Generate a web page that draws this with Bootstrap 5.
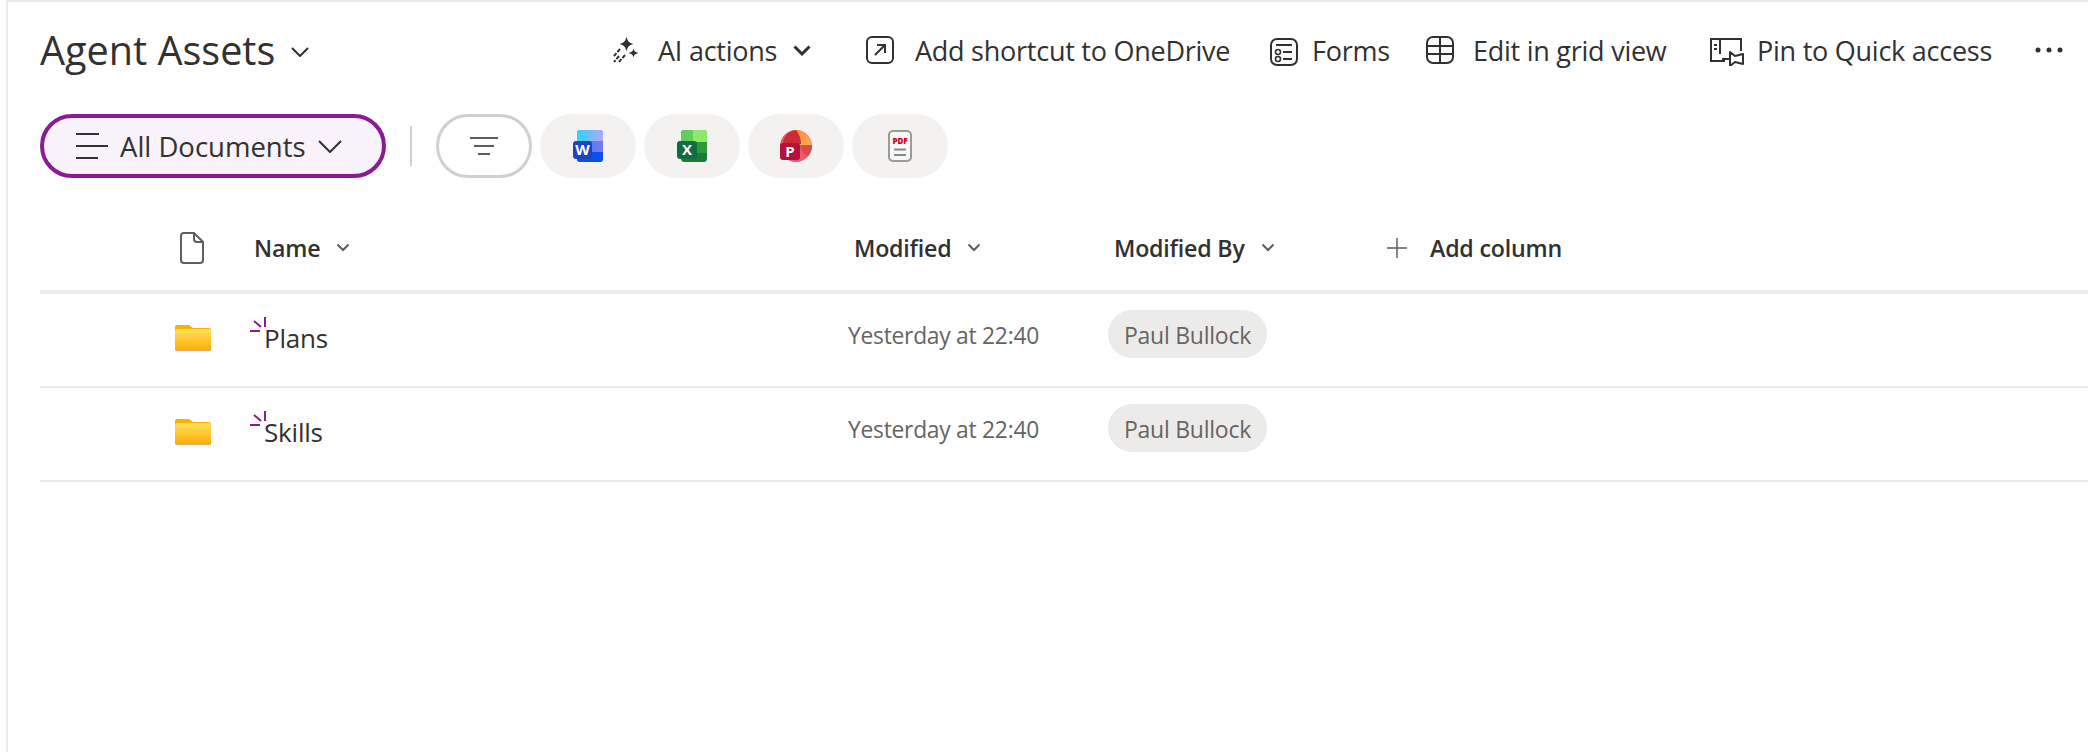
<!DOCTYPE html>
<html lang="en">
<head>
<meta charset="utf-8">
<title>Agent Assets</title>
<link rel="stylesheet" href="https://cdn.jsdelivr.net/npm/bootstrap@5.3.0/dist/css/bootstrap.min.css">
<style>
html,body{height:100%;}
body{background:#fff;color:#323130;font-family:"Open Sans","Noto Sans",sans-serif;overflow:hidden;}
svg{display:block;flex:none;}
.shell{height:752px;margin-left:6px;padding-left:32px;border-top:2px solid #edebe9;border-left:2px solid #edebe9;}
.cmdbar{height:100px;}
.title{flex:0 0 572px;font-size:39.6px;font-weight:500;line-height:1;}
.title>span{display:block;margin-bottom:3px;}
.cmd{font-size:27px;letter-spacing:-.25px;line-height:1;white-space:nowrap;height:40px;}
.cmd>span{display:block;margin-bottom:3px;}
.w-ai{flex:0 0 254px;}.w-short{flex:0 0 404px;}.w-forms{flex:0 0 156px;}.w-grid{flex:0 0 284px;}.w-pin{flex:0 0 325px;}
.g-ai{margin-right:18px;margin-bottom:4px;}.g-short{margin-right:21px;margin-bottom:4px;}.g-forms{margin-right:14px;}.g-grid{margin-right:19px;margin-bottom:4px;}.g-pin{margin-right:13px;margin-bottom:1px;}
.g-aich{margin-bottom:4px;}.dots{margin-bottom:4px;}
.pillbar{height:64px;margin-top:12px;}
.pill{height:64px;width:96px;border-radius:32px;background:#f3f2f1;padding:0;border:0;}
.pill-view{width:346px;border:4px solid #8a1a96;background:#f8f2fa;font-size:27.5px;font-weight:500;color:#323130;padding-left:32px;white-space:nowrap;}
.pill-view>span{display:block;margin-top:2px;}
.g-view{margin-right:12px;}.g-viewch{margin-left:12px;}
.pill-filter{background:#fff;border:3px solid #d2d0ce;}
.vsep{width:2px;height:40px;background:#d2d0ce;margin:0 24px;}
.thead{height:116px;padding-top:28px;border-bottom:4px solid #edebe9;font-size:23.2px;font-weight:600;letter-spacing:-.2px;}
.trow{height:94px;padding-bottom:12px;border-bottom:2px solid #edebe9;}
.c-type{flex:0 0 208px;padding-left:134px;}
.c-name{flex:0 0 600px;}
.trow .c-type,.trow .c-name{margin-top:8px;}
.trow .c-type svg{margin-left:1px;}
.c-mod{flex:0 0 260px;}
.c-by{flex:0 0 279px;}
.thead .lab{padding-left:6px;}
.thead .c-type svg{margin-left:6px;}
.g-plus{margin-right:23px;}
.fname{font-size:26px;padding-left:16px;position:relative;letter-spacing:-.2px;}
.spark{position:absolute;left:2px;top:-2px;}
.date{font-size:22.8px;color:#666462;letter-spacing:-.25px;margin-top:5px;}
.person{height:48px;width:159px;padding:3px 0 0;border-radius:24px;background:#edebe9;color:#666462;font-size:23px;font-weight:400;letter-spacing:-.25px;}
</style>
</head>
<body>
<main class="shell">
  <div class="cmdbar d-flex align-items-center">
    <div class="title d-flex align-items-center gap-3">
      <span>Agent Assets</span>
      <svg width="18" height="10" viewBox="0 0 18 10"><path d="M1 1l8 8 8-8" fill="none" stroke="#323130" stroke-width="2"/></svg>
    </div>
    <div class="cmd w-ai d-flex align-items-center">
      <svg width="28" height="28" viewBox="0 0 28 28" class="g-ai"><path d="M14.500 0.500C15.300 4.800 17 7 21.500 8 17 9 15.300 11.200 14.500 15.500 13.700 11.200 12 9 7.500 8 12 7 13.700 4.800 14.500 .5Z" fill="#323130"/><path d="M21.500 12.500C22 15 23.200 16.200 26.500 17 23.200 17.800 22 19 21.500 21.500 21 19 19.800 17.800 16.500 17 19.800 16.200 21 15 21.500 12.500Z" fill="#323130"/><path d="M8 13 2 20M7 20l-5 6M13 19l-6 7" stroke="#323130" stroke-width="2" stroke-dasharray="4 1.500" fill="none"/></svg>
      <span>AI actions</span>
      <svg width="18" height="11" viewBox="0 0 18 11" class="ms-3 g-aich"><path d="M1.500 1.500l7.500 7.500 7.500-7.500" fill="none" stroke="#323130" stroke-width="3"/></svg>
    </div>
    <div class="cmd w-short d-flex align-items-center">
      <svg width="28" height="28" viewBox="0 0 28 28" class="g-short"><rect x="1" y="1" width="26" height="26" rx="5" fill="none" stroke="#323130" stroke-width="2"/><path d="M9 19 19 9M11 9h8v8" fill="none" stroke="#323130" stroke-width="2"/></svg>
      <span>Add shortcut to OneDrive</span>
    </div>
    <div class="cmd w-forms d-flex align-items-center">
      <svg width="28" height="28" viewBox="0 0 28 28" class="g-forms"><rect x="1" y="1" width="26" height="26" rx="6" fill="none" stroke="#323130" stroke-width="2"/><path d="M6 7h16M13 14h9M13 21h9" stroke="#323130" stroke-width="2"/><circle cx="8" cy="14" r="2.500" fill="none" stroke="#323130" stroke-width="1.600"/><circle cx="8" cy="21" r="2.500" fill="none" stroke="#323130" stroke-width="1.600"/></svg>
      <span>Forms</span>
    </div>
    <div class="cmd w-grid d-flex align-items-center">
      <svg width="28" height="28" viewBox="0 0 28 28" class="g-grid"><rect x="1" y="1" width="26" height="26" rx="6" fill="none" stroke="#323130" stroke-width="2"/><path d="M1 10h26M1 18h26M14 1v26" stroke="#323130" stroke-width="2" fill="none"/></svg>
      <span>Edit in grid view</span>
    </div>
    <div class="cmd w-pin d-flex align-items-center">
      <svg width="34" height="28" viewBox="0 0 34 28" class="g-pin"><path d="M15 23H1V1h30v12M10 1v15M4 7h3M4 11h3" fill="none" stroke="#323130" stroke-width="2"/><path d="M12 21h9" stroke="#323130" stroke-width="2"/><path d="M20 14l5 4 8-2v10l-8-2-5 4z" fill="#fff" stroke="#323130" stroke-width="2" stroke-linejoin="round"/></svg>
      <span>Pin to Quick access</span>
    </div>
    <svg width="28" height="6" viewBox="0 0 28 6" class="dots"><circle cx="3" cy="3" r="2.500" fill="#323130"/><circle cx="14" cy="3" r="2.500" fill="#323130"/><circle cx="25" cy="3" r="2.500" fill="#323130"/></svg>
  </div>

  <div class="pillbar d-flex align-items-center">
    <button class="btn pill pill-view d-flex align-items-center" type="button">
      <svg width="32" height="26" viewBox="0 0 32 26" class="g-view"><path d="M0 1h23M0 13h32M0 25h22" stroke="#323130" stroke-width="2"/></svg>
      <span>All Documents</span>
      <svg width="24" height="13" viewBox="0 0 24 13" class="g-viewch"><path d="M1 1l11 11L23 1" fill="none" stroke="#323130" stroke-width="2"/></svg>
    </button>
    <span class="vsep"></span>
    <div class="d-flex gap-2">
      <button class="btn pill pill-filter d-flex align-items-center justify-content-center" type="button">
        <svg width="28" height="18" viewBox="0 0 28 18"><path d="M0 1h28M4 9h20M8 17h12" stroke="#605e5c" stroke-width="2.200"/></svg>
      </button>
      <button class="btn pill d-flex align-items-center justify-content-center" type="button">
        <svg width="30" height="32" viewBox="0 0 30 32"><defs><linearGradient id="wt" x1="0" y1="0" x2="1" y2="0"><stop offset="0" stop-color="#2dd4fb"/><stop offset="1" stop-color="#b5a5f5"/></linearGradient><linearGradient id="wm" x1="0" y1="0" x2="1" y2="0"><stop offset="0" stop-color="#1f8cf0"/><stop offset="1" stop-color="#7f78ee"/></linearGradient></defs><rect x="4" y="0" width="26" height="32" rx="3.500" fill="#0b4fe6"/><path d="M7.500 0h19a3.500 3.500 0 0 1 3.500 3.500V11H4V3.500A3.500 3.500 0 0 1 7.500 0Z" fill="url(#wt)"/><rect x="4" y="11" width="26" height="11" fill="url(#wm)"/><path d="M4 22h26v6.500a3.500 3.500 0 0 1-3.500 3.500H7.500A3.500 3.500 0 0 1 4 28.500Z" fill="#0b51e8"/><rect x="0" y="11" width="19" height="18" rx="3" fill="#1c46bb"/><text x="9.500" y="25" text-anchor="middle" font-family="Open Sans,sans-serif" font-size="15" font-weight="700" fill="#fff">W</text></svg>
      </button>
      <button class="btn pill d-flex align-items-center justify-content-center" type="button">
        <svg width="30" height="32" viewBox="0 0 30 32"><rect x="4" y="0" width="26" height="32" rx="3.500" fill="#1c7a33"/><path d="M7.500 0H16v12H4V3.500A3.500 3.500 0 0 1 7.500 0Z" fill="#5fce5b"/><path d="M16 0h10.500A3.500 3.500 0 0 1 30 3.500V12H16Z" fill="#8fe76c"/><rect x="16" y="12" width="14" height="11" fill="#2c9a3a"/><rect x="0" y="11" width="20" height="18" rx="3" fill="#0f6d42"/><text x="10" y="25" text-anchor="middle" font-family="Open Sans,sans-serif" font-size="15" font-weight="700" fill="#fff">X</text></svg>
      </button>
      <button class="btn pill d-flex align-items-center justify-content-center" type="button">
        <svg width="32" height="32" viewBox="0 0 32 32"><defs><linearGradient id="po" x1="0" y1="0" x2="1" y2="1"><stop offset="0" stop-color="#ff8a3c"/><stop offset="1" stop-color="#ffb14e"/></linearGradient></defs><circle cx="16" cy="16" r="16" fill="#ee5a64"/><path d="M16 0a16 16 0 0 1 16 16H18Z" fill="url(#po)"/><path d="M8 3a16 16 0 0 1 8-3c3 4 5 8 5 14H3A16 16 0 0 1 8 3Z" fill="#c92c39"/><path d="M20 15h12a16 16 0 0 1-4 11c-3 0-6-3-8-11Z" fill="#d84a4f"/><path d="M10 29h13a16 16 0 0 1-14 1Z" fill="#f04f95"/><rect x="0" y="13" width="20" height="17" rx="3" fill="#b4123a"/><text x="10" y="26.500" text-anchor="middle" font-family="Open Sans,sans-serif" font-size="15" font-weight="700" fill="#fff">P</text></svg>
      </button>
      <button class="btn pill d-flex align-items-center justify-content-center" type="button">
        <svg width="24" height="32" viewBox="0 0 24 32"><rect x="1" y="1" width="22" height="30" rx="4" fill="#f8f8f8" stroke="#9a9a9a" stroke-width="2"/><text x="12" y="14" text-anchor="middle" font-family="Open Sans,sans-serif" font-size="8" font-weight="800" fill="#d0021b">PDF</text><path d="M6 19.500h12M6 25h12" stroke="#8a8886" stroke-width="2"/></svg>
      </button>
    </div>
  </div>

  <div class="thead d-flex align-items-center">
    <div class="c-type"><svg width="24" height="32" viewBox="0 0 24 32"><path d="M3.500 1H14l9 9v18a3 3 0 0 1-3 3H4a3 3 0 0 1-3-3V3.500A2.500 2.500 0 0 1 3.500 1ZM14 1v6a3 3 0 0 0 3 3h6" fill="none" stroke="#605e5c" stroke-width="2"/></svg></div>
    <div class="c-name lab d-flex align-items-center gap-3"><span>Name</span><svg width="14" height="9" viewBox="0 0 14 9"><path d="M1.500 1.500l5.500 5.500 5.500-5.500" fill="none" stroke="#605e5c" stroke-width="2"/></svg></div>
    <div class="c-mod lab d-flex align-items-center gap-3"><span>Modified</span><svg width="14" height="9" viewBox="0 0 14 9"><path d="M1.500 1.500l5.500 5.500 5.500-5.500" fill="none" stroke="#605e5c" stroke-width="2"/></svg></div>
    <div class="c-by lab d-flex align-items-center gap-3"><span>Modified By</span><svg width="14" height="9" viewBox="0 0 14 9"><path d="M1.500 1.500l5.500 5.500 5.500-5.500" fill="none" stroke="#605e5c" stroke-width="2"/></svg></div>
    <div class="d-flex align-items-center"><svg width="20" height="20" viewBox="0 0 20 20" class="g-plus"><path d="M10 0v20M0 10h20" stroke="#605e5c" stroke-width="1.500"/></svg><span>Add column</span></div>
  </div>

  <div class="trow d-flex align-items-center">
    <div class="c-type"><svg width="36" height="26" viewBox="0 0 36 26"><defs><linearGradient id="fo" x1="0" y1="0" x2="0" y2="1"><stop offset="0" stop-color="#ffe05c"/><stop offset="1" stop-color="#ffb30f"/></linearGradient></defs><path d="M2 0h12l4 3h16a2 2 0 0 1 2 2v19a2 2 0 0 1-2 2H2a2 2 0 0 1-2-2V2a2 2 0 0 1 2-2Z" fill="#f5b400"/><path d="M0 6a2 2 0 0 1 2-2h32a2 2 0 0 1 2 2v17H0Z" fill="url(#fo)"/><path d="M0 24h36v0a2 2 0 0 1-2 2H2a2 2 0 0 1-2-2Z" fill="#e8a27c"/></svg></div>
    <div class="c-name"><span class="fname d-inline-block"><svg class="spark" width="16" height="16" viewBox="0 0 16 16"><path d="M15 0v10M4 4l7 6M0 14h10" stroke="#8a1a96" stroke-width="2" fill="none"/></svg>Plans</span></div>
    <div class="c-mod date">Yesterday at 22:40</div>
    <div class="c-by"><span class="badge person d-inline-flex align-items-center justify-content-center">Paul Bullock</span></div>
  </div>
  <div class="trow d-flex align-items-center">
    <div class="c-type"><svg width="36" height="26" viewBox="0 0 36 26"><path d="M2 0h12l4 3h16a2 2 0 0 1 2 2v19a2 2 0 0 1-2 2H2a2 2 0 0 1-2-2V2a2 2 0 0 1 2-2Z" fill="#f5b400"/><path d="M0 6a2 2 0 0 1 2-2h32a2 2 0 0 1 2 2v17H0Z" fill="url(#fo)"/><path d="M0 24h36v0a2 2 0 0 1-2 2H2a2 2 0 0 1-2-2Z" fill="#e8a27c"/></svg></div>
    <div class="c-name"><span class="fname d-inline-block"><svg class="spark" width="16" height="16" viewBox="0 0 16 16"><path d="M15 0v10M4 4l7 6M0 14h10" stroke="#8a1a96" stroke-width="2" fill="none"/></svg>Skills</span></div>
    <div class="c-mod date">Yesterday at 22:40</div>
    <div class="c-by"><span class="badge person d-inline-flex align-items-center justify-content-center">Paul Bullock</span></div>
  </div>
</main>
<script src="https://cdn.jsdelivr.net/npm/bootstrap@5.3.0/dist/js/bootstrap.bundle.min.js"></script>
</body>
</html>
